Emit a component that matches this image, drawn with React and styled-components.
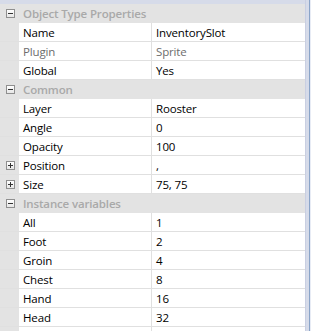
import React from 'react';
import styled, { createGlobalStyle } from 'styled-components';

const GlobalStyle = createGlobalStyle`
    html, body {
        margin: 0;
        padding: 0;
        background: #d6dbe9;
    }
`

const Frame = styled.div`
    width: 311px;
    height: 331px;
    overflow: hidden;
    display: flex;
    background: #d6dbe9;
    font-family: "Open Sans", "DejaVu Sans", sans-serif;
    font-size: 11.5px;
    letter-spacing: -0.15px;
`

const Grid = styled.div`
    width: 305px;
    margin-top: 4px;
    background: #e3e3e3;
    display: flex;
    flex-direction: column;
`

const Edge = styled.div`
    width: 6px;
    display: flex;
    justify-content: flex-end;
    border-left: 1px solid #c9cfe2;
    box-sizing: border-box;
`

const EdgeLine = styled.div`
    width: 2px;
    background: linear-gradient(to right, #8aa4c8 50%, #e8ecf5 50%);
`

const Row = styled.div`
    display: grid;
    grid-template-columns: 19px 132px 1px 1fr;
    height: 19px;
    flex-shrink: 0;
    box-sizing: border-box;
    border-bottom: ${p => (p.$category ? 'none' : '1px solid #e0e0e0')};
    background: ${p => (p.$category ? '#e3e3e3' : 'transparent')};
`

const Gutter = styled.div`
    display: flex;
    align-items: center;
    justify-content: center;
    background: #e3e3e3;
`

const Toggle = styled.div`
    width: 9px;
    height: 9px;
    box-sizing: border-box;
    border: 1px solid #8f8f8f;
    background: linear-gradient(#ffffff, #e6e6e6);
    position: relative;
    margin-left: 2px;

    &::before {
        content: '';
        position: absolute;
        left: 1px;
        right: 1px;
        top: 3px;
        height: 1px;
        background: #333;
    }

    &::after {
        content: '';
        display: ${p => (p.$open ? 'none' : 'block')};
        position: absolute;
        top: 1px;
        bottom: 1px;
        left: 3px;
        width: 1px;
        background: #333;
    }
`

const Cell = styled.div`
    background: #fff;
    color: ${p => (p.$dim ? '#6d6d6d' : '#000')};
    padding-left: 4px;
    line-height: 19px;
    white-space: nowrap;
    overflow: hidden;
`

const Divider = styled.div`
    background: #e0e0e0;
`

const CategoryLabel = styled.div`
    grid-column: 2 / 5;
    color: #a9a9a9;
    font-weight: 600;
    padding-left: 4px;
    line-height: 19px;
    white-space: nowrap;
`

const sections = [
    {
        title: 'Object Type Properties',
        rows: [
            ['Name', 'InventorySlot'],
            ['Plugin', 'Sprite', 'dim'],
            ['Global', 'Yes'],
        ],
    },
    {
        title: 'Common',
        rows: [
            ['Layer', 'Rooster'],
            ['Angle', '0'],
            ['Opacity', '100'],
            ['Position', ',', 'plus'],
            ['Size', '75, 75', 'plus'],
        ],
    },
    {
        title: 'Instance variables',
        rows: [
            ['All', '1'],
            ['Foot', '2'],
            ['Groin', '4'],
            ['Chest', '8'],
            ['Hand', '16'],
            ['Head', '32'],
            ['', ''],
        ],
    },
]

function App() {
    return (
        <>
            <GlobalStyle />
            <Frame>
                <Grid>
                    {sections.map(section => (
                        <React.Fragment key={section.title}>
                            <Row $category>
                                <Gutter><Toggle $open /></Gutter>
                                <CategoryLabel>{section.title}</CategoryLabel>
                            </Row>
                            {section.rows.map(([name, value, flag], i) => (
                                <Row key={name + i}>
                                    <Gutter>{flag === 'plus' ? <Toggle /> : null}</Gutter>
                                    <Cell $dim={flag === 'dim'}>{name}</Cell>
                                    <Divider />
                                    <Cell $dim={flag === 'dim'}>{value}</Cell>
                                </Row>
                            ))}
                        </React.Fragment>
                    ))}
                </Grid>
                <Edge><EdgeLine /></Edge>
            </Frame>
        </>
    );
}

export default App;
